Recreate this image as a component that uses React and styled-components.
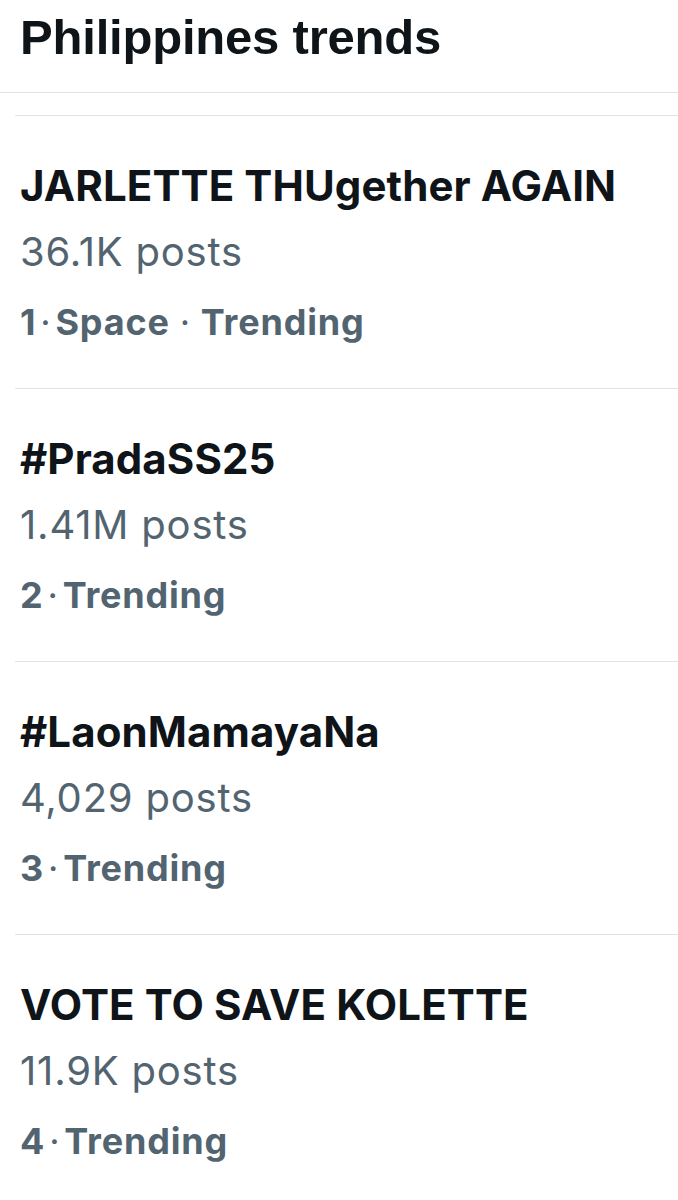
import React from "react";
import styled, { createGlobalStyle } from "styled-components";

const GlobalStyle = createGlobalStyle`
  html, body {
    margin: 0;
    padding: 0;
    background: #ffffff;
  }
  body {
    font-family: Inter, "Liberation Sans", sans-serif;
    color: #0f1419;
  }
`;

const Page = styled.div`
  width: 678px;
  min-height: 1200px;
  background: #ffffff;
`;

const Header = styled.div`
  box-sizing: border-box;
  padding: 9px 20px 0;
  height: 93px;
  border-bottom: 1px solid #e3e3e3;
`;

const HeaderTitle = styled.h1`
  margin: 0;
  font-family: "Liberation Sans", Arial, sans-serif;
  font-weight: 700;
  font-size: 49px;
  line-height: 56px;
  letter-spacing: -0.2px;
  color: #0f1419;
`;

const List = styled.div`
  margin-top: 22px;
  margin-left: 15px;
  border-top: 1px solid #e3e3e3;
`;

const Item = styled.div`
  height: 273px;
  box-sizing: border-box;
  padding: 45px 0 0 5px;
  border-bottom: ${(p) => (p.$last ? "none" : "1px solid #e3e3e3")};
`;

const TrendName = styled.div`
  font-weight: 700;
  font-size: 42px;
  line-height: 50px;
  letter-spacing: 0.1px;
  color: #0f1419;
  white-space: nowrap;
`;

const PostCount = styled.div`
  margin-top: 16px;
  font-weight: 400;
  font-size: 40px;
  line-height: 50px;
  letter-spacing: 0.8px;
  color: #536471;
`;

const Meta = styled.div`
  margin-top: 20px;
  font-weight: 700;
  font-size: 36px;
  line-height: 50px;
  letter-spacing: 0.8px;
  color: #536471;
  display: flex;
  align-items: baseline;
`;

const Dot = styled.span`
  margin: 0 ${(p) => (p.$wide ? 10 : 4)}px;
  font-weight: 400;
`;

const trends = [
  { name: "JARLETTE THUgether AGAIN", posts: "36.1K posts", rank: 1, tags: ["Space", "Trending"] },
  { name: "#PradaSS25", posts: "1.41M posts", rank: 2, tags: ["Trending"] },
  { name: "#LaonMamayaNa", posts: "4,029 posts", rank: 3, tags: ["Trending"] },
  { name: "VOTE TO SAVE KOLETTE", posts: "11.9K posts", rank: 4, tags: ["Trending"] },
];

function TrendItem({ trend, last }) {
  return (
    <Item $last={last}>
      <TrendName>{trend.name}</TrendName>
      <PostCount>{trend.posts}</PostCount>
      <Meta>
        <span>{trend.rank}</span>
        {trend.tags.map((tag, i) => (
          <React.Fragment key={tag}>
            <Dot $wide={i > 0}>·</Dot>
            <span>{tag}</span>
          </React.Fragment>
        ))}
      </Meta>
    </Item>
  );
}

export default function App() {
  return (
    <Page>
      <GlobalStyle />
      <Header>
        <HeaderTitle>Philippines trends</HeaderTitle>
      </Header>
      <List>
        {trends.map((trend, i) => (
          <TrendItem key={trend.rank} trend={trend} last={i === trends.length - 1} />
        ))}
      </List>
    </Page>
  );
}
